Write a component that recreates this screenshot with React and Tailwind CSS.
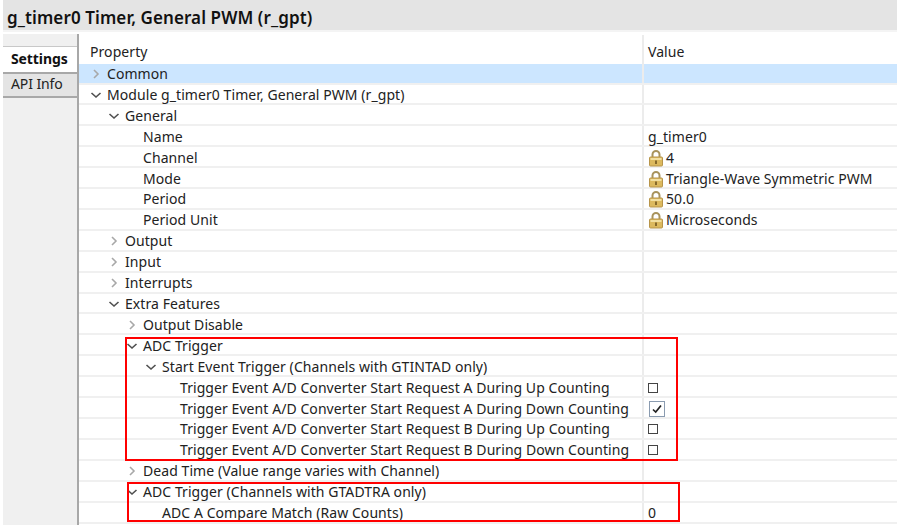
const rows = [
  { label: 'Common', level: 0, arrow: 'right', selected: true },
  { label: 'Module g_timer0 Timer, General PWM (r_gpt)', level: 0, arrow: 'down' },
  { label: 'General', level: 1, arrow: 'down' },
  { label: 'Name', level: 2, value: 'g_timer0' },
  { label: 'Channel', level: 2, value: '4', locked: true },
  { label: 'Mode', level: 2, value: 'Triangle-Wave Symmetric PWM', locked: true },
  { label: 'Period', level: 2, value: '50.0', locked: true },
  { label: 'Period Unit', level: 2, value: 'Microseconds', locked: true },
  { label: 'Output', level: 1, arrow: 'right' },
  { label: 'Input', level: 1, arrow: 'right' },
  { label: 'Interrupts', level: 1, arrow: 'right' },
  { label: 'Extra Features', level: 1, arrow: 'down' },
  { label: 'Output Disable', level: 2, arrow: 'right' },
  { label: 'ADC Trigger', level: 2, arrow: 'down' },
  { label: 'Start Event Trigger (Channels with GTINTAD only)', level: 3, arrow: 'down' },
  { label: 'Trigger Event A/D Converter Start Request A During Up Counting', level: 4, check: 'off' },
  { label: 'Trigger Event A/D Converter Start Request A During Down Counting', level: 4, check: 'on' },
  { label: 'Trigger Event A/D Converter Start Request B During Up Counting', level: 4, check: 'off' },
  { label: 'Trigger Event A/D Converter Start Request B During Down Counting', level: 4, check: 'off' },
  { label: 'Dead Time (Value range varies with Channel)', level: 2, arrow: 'right' },
  { label: 'ADC Trigger (Channels with GTADTRA only)', level: 2, arrow: 'down' },
  { label: 'ADC A Compare Match (Raw Counts)', level: 3, value: '0' },
]

const indents = ['pl-[9px]', 'pl-[27px]', 'pl-[45px]', 'pl-[64px]', 'pl-[82px]']

function Chevron({ dir }) {
  if (dir === 'right') {
    return (
      <svg width="16" height="16" viewBox="0 0 16 16" className="shrink-0">
        <path d="M6 4 L10 8 L6 12" fill="none" stroke="#a8a8a8" strokeWidth="1.6" />
      </svg>
    )
  }
  return (
    <svg width="16" height="16" viewBox="0 0 16 16" className="shrink-0">
      <path d="M3.5 6 L8 10 L12.5 6" fill="none" stroke="#505050" strokeWidth="1.6" />
    </svg>
  )
}

function Lock() {
  return (
    <svg width="16" height="18" viewBox="0 0 16 18" className="mr-[2px] shrink-0">
      <path d="M4.5 8 V5.5 a3.5 3.5 0 0 1 7 0 V8" fill="none" stroke="#a8935c" strokeWidth="2" />
      <rect x="1.5" y="8" width="13" height="9" rx="1" fill="#dcb95e" stroke="#b8954a" />
      <rect x="2.5" y="9" width="11" height="2" fill="#f2dfa0" />
      <rect x="7" y="11.5" width="2" height="3.5" fill="#86692a" />
    </svg>
  )
}

function Checkbox({ checked }) {
  if (checked) {
    return (
      <span className="ml-[1px] flex h-[16px] w-[16px] items-center justify-center border border-[#8a9bb0] bg-white">
        <svg width="14" height="14" viewBox="0 0 14 14">
          <path d="M3 7.5 L5.7 10 L11 3.5" fill="none" stroke="#222" strokeWidth="1.7" />
        </svg>
      </span>
    )
  }
  return <span className="block h-[10px] w-[10px] border border-[#444] bg-white" />
}

function Row({ row }) {
  return (
    <div className={`flex h-[20.91px] border-b-2 border-[#f0f0f0] ${row.selected ? 'bg-[#cce6ff]' : ''}`}>
      <div className={`flex w-[563px] shrink-0 items-center pt-[2px] ${indents[row.level]}`}>
        {row.arrow ? <Chevron dir={row.arrow} /> : <span className="w-[16px] shrink-0" />}
        <span className="ml-[3px] whitespace-nowrap">{row.label}</span>
      </div>
      <div className="flex flex-1 items-center border-l-2 border-[#ececec] pl-[4px] pt-[2px]">
        {row.locked && <Lock />}
        {row.value && <span className="whitespace-nowrap">{row.value}</span>}
        {row.check && <Checkbox checked={row.check === 'on'} />}
      </div>
    </div>
  )
}

export default function App() {
  return (
    <div className="relative h-[531px] w-[901px] overflow-hidden bg-white font-['Noto_Sans','Open_Sans',sans-serif] text-[14px] leading-none tracking-[0.07px] text-[#222]">
      <div className="ml-[3px] mr-[4px] flex h-[32px] items-center border-b-2 border-[#f4f4f4] bg-[#e4e4e4] pl-[4px] pt-[4px] text-[17px] font-semibold tracking-[0.1px] text-[#111]">
        g_timer0 Timer, General PWM (r_gpt)
      </div>
      <div className="ml-[3px] mr-[4px] flex h-[493px] pt-[2px]">
        <div className="flex w-[76px] shrink-0 flex-col border-r-2 border-[#a8a8a8] bg-[#f0f0f0] tracking-[-0.1px]">
          <div className="h-[13px] border-b border-[#c8c8c8]" />
          <div className="flex h-[25px] items-center bg-white pb-[2px] pl-[8px] font-bold text-[#111]">Settings</div>
          <div className="flex h-[26px] items-center border-y-2 border-[#a8a8a8] bg-[#e4e4e4] pb-[2px] pl-[8px]">API Info</div>
        </div>
        <div className="flex-1 pt-[1px]">
          <div className="flex h-[28.6px]">
            <div className="flex w-[563px] shrink-0 items-center pl-[11px] pt-[5px]">Property</div>
            <div className="flex flex-1 items-center border-l-2 border-[#ececec] pl-[4px] pt-[5px]">Value</div>
          </div>
          {rows.map((row, i) => (
            <Row key={i} row={row} />
          ))}
        </div>
      </div>
      {/* red annotation boxes drawn over the table */}
      <div className="absolute left-[125px] top-[337px] h-[124px] w-[553px] border-2 border-[#ff0000]" />
      <div className="absolute left-[127px] top-[482px] h-[40px] w-[553px] border-2 border-[#ff0000]" />
    </div>
  )
}
